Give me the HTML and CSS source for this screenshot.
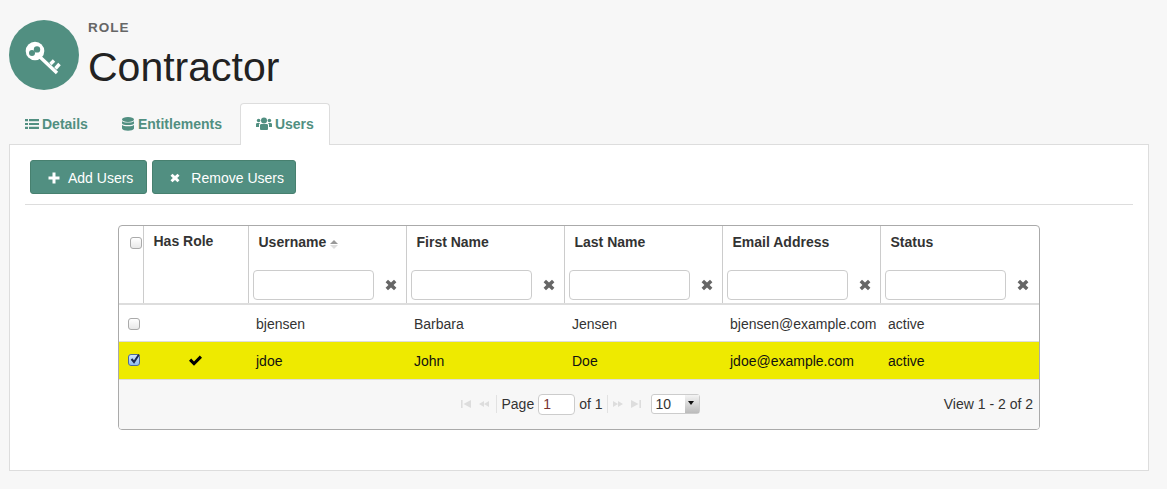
FILE: index.html
```html
<!DOCTYPE html>
<html lang="en">
<head>
    <meta charset="UTF-8">
    <title>Contractor - Role</title>
    <link rel="stylesheet" href="styles.css">
</head>
<body>
    <svg class="defs" width="0" height="0">
        <symbol id="remove" viewBox="0 0 12 12">
            <path d="M3 .8 6 3.6 9 .8 11.4 3.2 8.6 6 11.4 8.8 9 11.2 6 8.4 3 11.2.6 8.8 3.4 6 .6 3.2Z"/>
        </symbol>
        <symbol id="first" viewBox="0 0 12 8"><path d="M1 0H2.6V8H1ZM11 0V8L3.5 4Z"/></symbol>
        <symbol id="prev" viewBox="0 0 12 8"><path d="M6 1V7L1 4ZM11 1V7L6 4Z"/></symbol>
        <symbol id="next" viewBox="0 0 12 8"><path d="M1 1V7L6 4ZM6 1V7L11 4Z"/></symbol>
        <symbol id="last" viewBox="0 0 12 8"><path d="M1 0V8L8.5 4ZM9.4 0H11V8H9.4Z"/></symbol>
    </svg>

    <header class="page-header">
        <div class="avatar">
            <svg width="70" height="70" viewBox="0 0 70 70">
                <circle cx="26" cy="31" r="9.3" fill="#fff"/>
                <circle cx="23" cy="33" r="3" fill="#518f81"/>
                <circle cx="28" cy="29.400" r="3.200" fill="#518f81"/>
                <path d="M31 37 48 53M41.5 44 45 40.500M46.500 48.500 50.500 44" fill="none" stroke="#fff" stroke-width="3.4"/>
            </svg>
        </div>
        <div class="titles">
            <div class="eyebrow">ROLE</div>
            <h1>Contractor</h1>
        </div>
    </header>

    <nav class="tabs">
        <a class="tab">
            <svg width="14" height="12" viewBox="0 0 14 12"><path d="M0 1H3V3.200H0ZM4 1H14V3.200H4ZM0 4.900H3V7.100H0ZM4 4.900H14V7.100H4ZM0 8.800H3V11H0ZM4 8.800H14V11H4Z"/></svg>
            Details
        </a>
        <a class="tab tab-wide">
            <svg width="12" height="14" viewBox="0 0 12 14"><ellipse cx="6" cy="2.500" rx="6" ry="2.500"/><path d="M0 4C1 6 11 6 12 4V6.500C11 8.500 1 8.500 0 6.500ZM0 7.700C1 9.700 11 9.700 12 7.700V11.500C11 14.500 1 14.500 0 11.500Z"/></svg>
            Entitlements
        </a>
        <a class="tab active">
            <svg width="16" height="13" viewBox="0 0 16 13"><circle cx="8" cy="3.500" r="3"/><circle cx="2.600" cy="3.500" r="1.800"/><circle cx="13.400" cy="3.500" r="1.800"/><path d="M4 8C4 7 5 7 6 7H10C11 7 12 7 12 8V12C12 13 11 13 10 13H6C5 13 4 13 4 12ZM0 7C0 6 1 6 2 6H4L3 7.500V10H0ZM16 7C16 6 15 6 14 6H12L13 7.500V10H16Z"/></svg>
            Users
        </a>
    </nav>

    <section class="panel">
        <div class="toolbar">
            <button class="btn">
                <svg width="12" height="12" viewBox="0 0 12 12"><path d="M4.500 .5H7.500V4.500H11.500V7.500H7.500V11.500H4.500V7.500H.5V4.500H4.500Z"/></svg>
                Add Users
            </button>
            <button class="btn btn-remove">
                <svg width="10" height="10"><use href="#remove"/></svg>
                Remove Users
            </button>
        </div>

        <div class="grid-box">
            <table class="grid">
                <colgroup>
                    <col class="col-check">
                    <col class="col-role">
                    <col class="col-user">
                    <col class="col-wide">
                    <col class="col-wide">
                    <col class="col-wide">
                    <col>
                </colgroup>
                <thead>
                    <tr>
                        <th class="check-head" rowspan="2"><span class="check"></span></th>
                        <th class="role-head" rowspan="2">Has Role</th>
                        <th>Username <span class="sort"><i class="up"></i><i class="down"></i></span></th>
                        <th>First Name</th>
                        <th>Last Name</th>
                        <th>Email Address</th>
                        <th>Status</th>
                    </tr>
                    <tr class="filters">
                        <td><div class="filter"><input type="text"><svg width="12" height="12"><use href="#remove"/></svg></div></td>
                        <td><div class="filter"><input type="text"><svg width="12" height="12"><use href="#remove"/></svg></div></td>
                        <td><div class="filter"><input type="text"><svg width="12" height="12"><use href="#remove"/></svg></div></td>
                        <td><div class="filter"><input type="text"><svg width="12" height="12"><use href="#remove"/></svg></div></td>
                        <td><div class="filter"><input type="text"><svg width="12" height="12"><use href="#remove"/></svg></div></td>
                    </tr>
                </thead>
                <tbody>
                    <tr class="plain">
                        <td class="check-cell"><span class="check"></span></td>
                        <td></td>
                        <td>bjensen</td>
                        <td>Barbara</td>
                        <td>Jensen</td>
                        <td>bjensen@example.com</td>
                        <td>active</td>
                    </tr>
                    <tr class="selected">
                        <td class="check-cell">
                            <span class="check checked"><svg width="12" height="12" viewBox="0 0 12 12"><path d="M2.500 6 5 9 10 1.500" fill="none" stroke="#1b2a55" stroke-width="2"/></svg></span>
                        </td>
                        <td class="role-mark">
                            <svg width="13" height="11" viewBox="0 0 13 11"><path d="M0 5.800 2.200 3.600 5 6.400 10.800 .5 13 2.700 5 10.700Z"/></svg>
                        </td>
                        <td>jdoe</td>
                        <td>John</td>
                        <td>Doe</td>
                        <td>jdoe@example.com</td>
                        <td>active</td>
                    </tr>
                </tbody>
            </table>

            <div class="pager">
                <div></div>
                <div class="pager-mid">
                    <svg width="12" height="8"><use href="#first"/></svg>
                    <svg width="12" height="8"><use href="#prev"/></svg>
                    <span class="sep"></span>
                    <span>Page</span>
                    <input class="page-input" type="text" value="1">
                    <span>of 1</span>
                    <span class="sep"></span>
                    <svg width="12" height="8"><use href="#next"/></svg>
                    <svg width="12" height="8"><use href="#last"/></svg>
                    <span class="page-size">10<span class="arrow"></span></span>
                </div>
                <div class="view-count">View 1 - 2 of 2</div>
            </div>
        </div>
    </section>
</body>
</html>
```

FILE: styles.css
```css
* {
    box-sizing: border-box;
}
body {
    margin: 0;
    height: 489px;
    overflow: hidden;
    background-color: #f7f7f7;
    font-family: "Liberation Sans", Arial, sans-serif;
    font-size: 14px;
    color: #333;
}
.defs {
    position: absolute;
}
.page-header {
    display: flex;
    gap: 9px;
    padding: 20px 0 0 9px;
    height: 103px;
}
.avatar {
    width: 70px;
    height: 70px;
    border-radius: 50%;
    background-color: #518f81;
}
.eyebrow {
    font-size: 13.5px;
    font-weight: bold;
    letter-spacing: 1px;
    color: #666;
    line-height: 16px;
}
h1 {
    margin: 7px 0 0;
    font-size: 41px;
    font-weight: normal;
    line-height: 48px;
    color: #222;
}
.tabs {
    display: flex;
    height: 42px;
    padding-left: 9px;
    position: relative;
    margin-bottom: -1px;
}
.tab {
    display: flex;
    align-items: center;
    gap: 3px;
    padding: 0 16px 2px 15px;
    height: 42px;
    font-weight: bold;
    font-size: 14px;
    color: #518f81;
    border: 1px solid transparent;
    border-bottom: none;
}
.tab svg {
    fill: #518f81;
}
.tab-wide {
    gap: 4px;
    padding-left: 16px;
}
.tab.active {
    margin-left: 1px;
    padding-right: 15px;
    background: #fff;
    border-color: #ddd;
    border-radius: 4px 4px 0 0;
}
.panel {
    margin: 0 18px 0 9px;
    height: 327px;
    background: #fff;
    border: 1px solid #ddd;
    padding: 15px 15px 0;
}
.toolbar {
    display: flex;
    gap: 5px;
    padding: 0 0 10px 5px;
    border-bottom: 1px solid #ddd;
}
.btn {
    display: flex;
    align-items: center;
    gap: 8px;
    height: 34px;
    padding: 1px 13px 0 17px;
    background-color: #518f81;
    border: 1px solid #47806f;
    border-radius: 3px;
    color: #fff;
    font-family: inherit;
    font-size: 14px;
}
.btn-remove {
    gap: 11px;
    padding-right: 11px;
}
.btn svg {
    fill: #fff;
}
.grid-box {
    width: 922px;
    margin: 20px 0 0 93px;
    border: 1px solid #aaa;
    border-radius: 4px;
    overflow: hidden;
}
.grid {
    width: 100%;
    table-layout: fixed;
    border-collapse: collapse;
}
.col-check {
    width: 24px;
}
.col-role {
    width: 105px;
}
.col-user,
.col-wide {
    width: 158px;
}
th {
    height: 32px;
    padding: 0 9px 0 10px;
    text-align: left;
    font-size: 14px;
    color: #333;
    border-left: 1px solid #ccc;
    vertical-align: middle;
}
th:first-child {
    border-left: none;
}
.role-head {
    vertical-align: top;
    padding-top: 7px;
}
.check-head {
    vertical-align: top;
    padding: 11px 0 0;
}
.filters td {
    height: 46px;
    padding: 0 4px;
    border-left: 1px solid #ccc;
    vertical-align: top;
}
.filter {
    display: flex;
    align-items: center;
    padding-top: 12px;
}
.filter input {
    width: 121px;
    height: 30px;
    border: 1px solid #ccc;
    border-radius: 4px;
    background: #fff;
}
.filter svg {
    margin-left: 11px;
    fill: #666;
}
thead {
    border-bottom: 2px solid #ddd;
}
tbody td {
    padding: 1px 8px 0;
    font-size: 14px;
    height: 37px;
    border-bottom: 1px solid #ddd;
}
.plain td {
    padding-top: 3px;
}
.selected td {
    background-color: #eeea00;
    color: #111;
    height: 38px;
}
.check-cell {
    padding: 0 0 0 9px;
}
.check {
    display: block;
    position: relative;
    width: 12px;
    height: 12px;
    border: 1px solid #aaa;
    border-radius: 3px;
    background: linear-gradient(#fff, #e8e8e8);
}
.check-head .check {
    margin: 0 auto 0 11px;
}
.check.checked {
    border-color: #4a6a9c;
    background: linear-gradient(#cfe3fb, #8fbdf0);
}
.check svg {
    position: absolute;
    left: 0;
    top: -2px;
}
.role-mark {
    text-align: center;
    padding-right: 9px;
}
.role-mark svg {
    display: block;
    margin: 0 auto;
}
.sort {
    display: inline-flex;
    flex-direction: column;
    gap: 1px;
    vertical-align: 3px;
}
.sort i {
    width: 0;
    height: 0;
    border-left: 4px solid transparent;
    border-right: 4px solid transparent;
}
.sort .up {
    border-bottom: 4px solid #999;
}
.sort .down {
    border-top: 4px solid #ddd;
}
.pager {
    display: grid;
    grid-template-columns: 1fr auto 1fr;
    align-items: center;
    height: 49px;
    background: #f7f7f7;
    padding: 0 6px 0 0;
}
.pager-mid {
    display: flex;
    align-items: center;
    gap: 4px;
    padding-left: 8px;
}
.pager-mid > svg {
    fill: #ddd;
    margin-right: 2px;
}
.sep {
    width: 1px;
    height: 18px;
    background: #e2e2e2;
}
.page-input {
    width: 37px;
    height: 21px;
    padding: 0 4px;
    border: 1px solid #ccc;
    border-radius: 4px;
    font-family: inherit;
    font-size: 14px;
    color: #733;
}
.page-size {
    position: relative;
    width: 49px;
    height: 20px;
    margin-left: 3px;
    padding-left: 4px;
    border: 1px solid #ccc;
    border-radius: 3px;
    background: #fff;
    line-height: 19px;
}
.arrow {
    position: absolute;
    right: 0;
    top: 0;
    width: 14px;
    height: 18px;
    background: linear-gradient(#f4f4f4, #bbb);
}
.arrow::after {
    content: "";
    position: absolute;
    left: 3px;
    top: 6px;
    border-left: 3px solid transparent;
    border-right: 3px solid transparent;
    border-top: 4px solid #111;
}
.view-count {
    text-align: right;
}
```
